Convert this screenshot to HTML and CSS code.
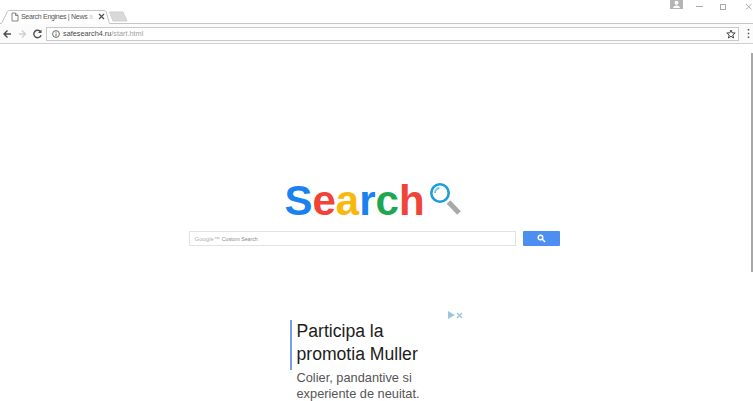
FILE: index.html
```html
<!DOCTYPE html>
<html lang="en">
<head>
<meta charset="utf-8">
<title>Search Engines | News and More</title>
<link rel="stylesheet" href="styles.css">
</head>
<body>
<header class="chrome">
  <div class="tabstrip">
    <svg class="tab-shape" width="112" height="24" viewBox="0 0 112 24"><path d="M0 23.500 H1.500 L7.500 11.500 Q8 10.500 9.500 10.500 L104 10.500 Q105.500 10.500 106 11.500 L109.500 23.500 H112" fill="#fff" stroke="#c4c4c4"/></svg>
    <div class="tab">
      <svg class="tab-page" width="8" height="10" viewBox="0 0 8 10"><path d="M1 1 H4.500 L7 3.500 V9 H1 Z M4.500 1 V3.500 H7" fill="none" stroke="#777" stroke-width="0.900"/></svg>
      <span class="tab-title">Search Engines | News <span class="fade">a</span></span>
      <svg class="tab-close" width="7" height="7" viewBox="0 0 7 7"><path d="M1 1 L6 6 M6 1 L1 6" stroke="#555" stroke-width="1.300"/></svg>
    </div>
    <svg class="newtab" width="20" height="11" viewBox="0 0 20 11"><path d="M0.500 1 H14 L18 10 H4 Z" fill="#d9d9d9" stroke="#cfcfcf"/></svg>
    <div class="winctl">
      <div class="profile"><svg width="13" height="9" viewBox="0 0 13 9"><circle cx="6.500" cy="2.800" r="2" fill="#fff"/><path d="M3 8 Q3.500 5.400 6.500 5.400 Q9.500 5.400 10 8 Z" fill="#fff"/></svg></div>
      <svg class="wbtn-a" width="7" height="12" viewBox="0 0 7 12"><path d="M0 6.500 H7" stroke="#aaa"/></svg>
      <svg class="wbtn-b" width="7" height="12" viewBox="0 0 7 12"><rect x="0.500" y="4.500" width="5" height="5" fill="none" stroke="#aaa"/></svg>
      <svg class="wbtn-c" width="6" height="12" viewBox="0 0 6 12"><path d="M0 4 L5.500 9.500 M5.500 4 L0 9.500" stroke="#b0b0b0"/></svg>
    </div>
  </div>
  <div class="toolbar">
    <svg class="nav" width="44" height="12" viewBox="0 0 44 12"><path d="M3.500 6 H10 M6.500 2.500 L3 6 L6.500 9.500" fill="none" stroke="#4c4c4c" stroke-width="1.400"/><path d="M18 6 H24.500 M21 2.500 L24.500 6 L21 9.500" fill="none" stroke="#cfcfcf" stroke-width="1.300"/><path d="M39.500 3.800 A3.700 3.700 0 1 0 40 7.200" fill="none" stroke="#4c4c4c" stroke-width="1.400"/><path d="M40.500 1.500 V5 H37 Z" fill="#4c4c4c"/></svg>
    <div class="omnibox">
      <svg class="info" width="8" height="8" viewBox="0 0 8 8"><circle cx="4" cy="4" r="3.400" fill="none" stroke="#555" stroke-width="0.900"/><path d="M4 3.500 V6.200 M4 1.800 V2.700" stroke="#555" stroke-width="0.900"/></svg>
      <span class="url"><span class="host">safesearch4.ru</span>/start.html</span>
      <svg class="star" width="10" height="10" viewBox="0 0 10 10"><path d="M5 1 L6.100 3.800 L9.200 4 L6.800 6 L7.600 9 L5 7.300 L2.400 9 L3.200 6 L0.800 4 L3.900 3.800 Z" fill="none" stroke="#444"/></svg>
    </div>
    <svg class="menu" width="3" height="11" viewBox="0 0 3 11"><path d="M1.500 1 V2.500 M1.500 4.700 V6.200 M1.500 8.400 V9.900" stroke="#555" stroke-width="1.500"/></svg>
  </div>
</header>
<main class="page">
  <div class="logo">
    <span class="logo-text"><span class="c-blue">S</span><span class="c-red">e</span><span class="c-yellow">a</span><span class="c-blue">r</span><span class="c-green">c</span><span class="c-red">h</span></span>
    <svg class="logo-glass" width="36" height="34" viewBox="0 0 36 34"><path d="M19.500 19 L30 30" stroke="#a9a9a9" stroke-width="5"/><circle cx="11" cy="10" r="8.700" fill="#fff" stroke="#1a9ddb" stroke-width="2.600"/><path d="M6 10 A5 5 0 0 1 10.500 5" fill="none" stroke="#6cc6ee" stroke-width="1.800"/></svg>
  </div>
  <form class="search">
    <div class="search-box"><span class="g-mark">Google™</span><span class="cse">Custom Search</span></div>
    <div class="search-btn"><svg width="9" height="9" viewBox="0 0 9 9"><circle cx="3.500" cy="3.500" r="2.300" fill="none" stroke="#fff" stroke-width="1.400"/><path d="M5.300 5.300 L8 8" stroke="#fff" stroke-width="1.600"/></svg></div>
  </form>
  <section class="ad">
    <div class="ad-flag"><span class="ad-play"></span><svg width="7" height="7" viewBox="0 0 7 7"><path d="M1 1 L6 6 M6 1 L1 6" stroke="#9cc9da" stroke-width="1.300"/></svg></div>
    <h2 class="ad-title">Participa la<br>promotia Muller</h2>
    <p class="ad-body">Colier, pandantive si<br>experiente de neuitat.</p>
  </section>
  <div class="scrollbar"></div>
</main>
</body>
</html>
```
FILE: styles.css
```css
* { box-sizing: border-box; }
html, body { margin: 0; padding: 0; }
body {
  width: 753px;
  height: 401px;
  overflow: hidden;
  background: #fff;
  font-family: "Liberation Sans", Arial, sans-serif;
}
.chrome { height: 44px; background: #fff; border-bottom: 1px solid #d0d0d0; }
.tabstrip { position: relative; height: 24px; display: flex; }
.tabstrip::after { content: ""; position: absolute; left: 110px; right: 0; bottom: 0; height: 1px; background: #c4c4c4; }
.tab-shape { position: absolute; left: 0; top: 0; }
.tab {
  position: relative;
  width: 107px;
  margin-left: 2px;
  padding: 12px 0 0 9px;
  display: flex;
  align-items: flex-start;
}
.tab-page { flex: none; }
.tab-title { margin: -1px 0 0 2px; font-size: 7px; letter-spacing: -0.3px; line-height: 11px; color: #555; white-space: nowrap; width: 77px; flex: none; }
.fade { color: #c8c8c8; }
.tab-close { flex: none; margin: 1px 0 0 0; }
.newtab { margin: 11px 0 0 0; flex: none; }
.winctl { position: absolute; top: 0; right: 1px; display: flex; align-items: flex-start; }
.profile { width: 13px; height: 9px; background: #b5b5b5; display: flex; }
.wbtn-a { flex: none; margin-left: 13px; }
.wbtn-b { flex: none; margin-left: 17px; }
.wbtn-c { flex: none; margin-left: 19px; }
.toolbar { height: 19px; display: flex; align-items: center; background: #fbfbfb; }
.nav { flex: none; margin-left: 1px; }
.omnibox {
  width: 693px;
  height: 14px;
  margin-left: 1px;
  background: #fff;
  border: 1px solid #c9c9c9;
  display: flex;
  align-items: center;
  padding: 0 2px 0 5px;
}
.info { flex: none; }
.url { margin-left: 3px; font-size: 7.300px; color: #a0a0a0; white-space: nowrap; }
.host { color: #4a4a4a; }
.star { margin-left: auto; }
.menu { margin-left: 8px; flex: none; }
.page { position: relative; height: 357px; overflow: hidden; display: flex; flex-direction: column; align-items: center; }
.logo { flex: none; margin: 132px 0 0 -4px; display: flex; align-items: flex-start; height: 55px; }
.logo-text { font-size: 42px; line-height: 50px; font-weight: 700; }
.logo-glass { margin: 7px 0 0 4px; }
.c-blue { color: #1a82f0; }
.c-red { color: #f04438; }
.c-yellow { color: #f8b90c; }
.c-green { color: #1ea750; }
.search { flex: none; display: flex; gap: 7px; margin-left: -5px; }
.search-box {
  width: 327px;
  height: 15px;
  border: 1px solid #e2e2e2;
  display: flex;
  align-items: center;
  padding-left: 5px;
}
.g-mark { font-size: 6px; color: #b0b0b0; }
.cse { font-size: 5.200px; margin-left: 2px; color: #8a8a8a; }
.search-btn {
  width: 37px;
  height: 15px;
  background: #4d8ff0;
  border-radius: 1px;
  display: flex;
  align-items: center;
  justify-content: center;
}
.ad { flex: none; position: relative; width: 174px; margin: 65px 0 0; height: 90px; }
.ad-flag { position: absolute; right: 1px; top: 0; height: 8px; display: flex; gap: 1px; align-items: center; }
.ad-play { width: 0; height: 0; border-left: 7px solid #9cc9da; border-top: 4px solid transparent; border-bottom: 4px solid transparent; }
.ad-title {
  margin: 9px 0 0;
  padding: 0 0 4px 5px;
  border-left: 2px solid #7b9cf0;
  font-size: 17.600px;
  line-height: 23px;
  font-weight: 400;
  color: #1c1c1c;
}
.ad-body { margin: 0; padding: 0 0 0 7px; font-size: 12.800px; line-height: 16px; color: #555; }
.scrollbar { position: absolute; right: 0; top: 9px; width: 2px; height: 219px; background: #a8a8a8; }
```
